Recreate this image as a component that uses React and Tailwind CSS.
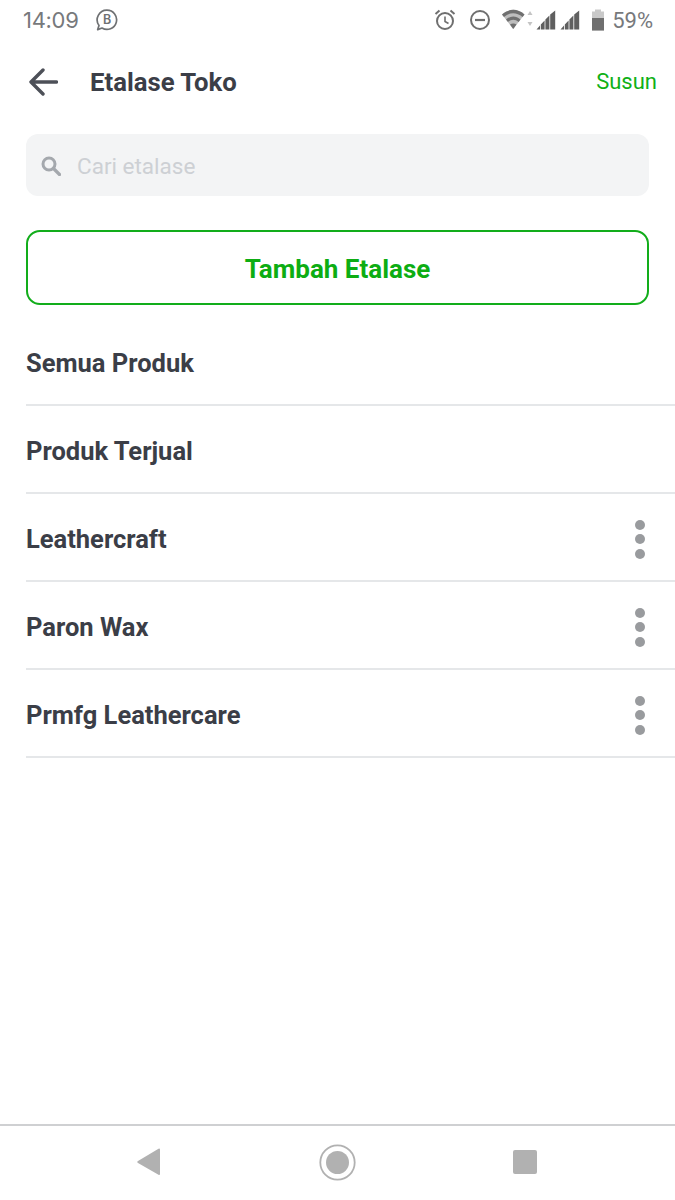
import React from "react";

function Dots() {
  return (
    <div className="flex flex-col gap-[4.5px] items-center pt-[4px]">
      <span className="w-[10px] h-[10px] rounded-full bg-[#999b9e]" />
      <span className="w-[10px] h-[10px] rounded-full bg-[#999b9e]" />
      <span className="w-[10px] h-[10px] rounded-full bg-[#999b9e]" />
    </div>
  );
}

function Row({ label, menu }) {
  return (
    <div className="h-[88px] ml-[26px] border-b-2 border-[#e5e7e9] flex items-center justify-between pr-[30px]">
      <span className="text-[25.5px] font-bold text-[#3b3e47] pt-[4px]">{label}</span>
      {menu && <Dots />}
    </div>
  );
}

function Signal() {
  return (
    <svg width="20" height="20" viewBox="0 0 20 20">
      <path d="M0.5 19.5 L4 15.5 V19.5Z M4.8 14.5 L8.6 10.5 V19.5 H4.8Z M9.4 9.6 L13.4 5.4 V19.5 H9.4Z M14.2 4.6 L19.2 0.6 V19.5 H14.2Z" fill="#5f5f5f" />
    </svg>
  );
}

export default function App() {
  return (
    <div className="w-[675px] h-[1200px] bg-white flex flex-col font-['Roboto',sans-serif] overflow-hidden">
      <div className="h-[40px] flex items-center justify-between pl-[23px] pr-[22px] text-[#77797c]">
        <div className="flex items-center gap-[16px]">
          <span className="text-[22px] font-['Inter',sans-serif] tracking-[-0.3px]">14:09</span>
          <svg width="24" height="24" viewBox="0 0 24 24" fill="none">
            <path d="M12 2.2a9.6 9.6 0 1 1-5 17.8l-4.3 1.6 1.3-4.2A9.6 9.6 0 0 1 12 2.2Z" stroke="#6f7173" strokeWidth="1.7" strokeLinejoin="round" />
            <text x="12" y="16.2" textAnchor="middle" fontSize="12.5" fontWeight="600" fill="#6f7173" fontFamily="Inter, sans-serif">B</text>
          </svg>
        </div>
        <div className="flex items-center">
          <svg width="22" height="24" viewBox="0 0 22 24" fill="none" className="mr-[13px]">
            <circle cx="11" cy="13" r="8" stroke="#6f6f6f" strokeWidth="2" />
            <path d="M11 8.5V13.5L14.5 15.5" stroke="#6f6f6f" strokeWidth="1.6" />
            <path d="M1.5 6L5.5 2.5M20.5 6L16.5 2.5" stroke="#6f6f6f" strokeWidth="2" />
          </svg>
          <svg width="22" height="22" viewBox="0 0 22 22" fill="none" className="mr-[10px]">
            <circle cx="11" cy="11" r="9" stroke="#6f6f6f" strokeWidth="2" />
            <path d="M6 11H16" stroke="#6f6f6f" strokeWidth="2.2" />
          </svg>
          <svg width="34" height="22" viewBox="0 0 34 22" fill="none" className="mr-[1px]">
            <path d="M1 5.5C8 -0.5 16 -1 23.5 5.5L12.2 20Z" fill="#bdbdbd" />
            <path d="M1 5.5C8 -0.5 16 -1 23.5 5.5L21.6 8C15.5 3 8.5 3 3 8Z" fill="#6f6f6f" />
            <path d="M5 10.5C9.5 6.5 15 6.5 19.5 10.5L17.6 13C14 10 10.5 10 7 13Z" fill="#6f6f6f" />
            <path d="M9 15.5C11 14 13.5 14 15.5 15.5L12.2 20Z" fill="#6f6f6f" />
            <path d="M29 2L31.5 6H26.5ZM29 17L31.5 13H26.5Z" fill="#c4c4c4" />
          </svg>
          <Signal />
          <span className="w-[4px]" />
          <Signal />
          <svg width="14" height="22" viewBox="0 0 14 22" className="ml-[11px] mr-[7px]">
            <path d="M4 0.5H10V2.5H13V21.5H1V2.5H4Z" fill="#c9c9c9" />
            <path d="M1 9H13V21.5H1Z" fill="#6f6f6f" />
          </svg>
          <span className="text-[22px]">59%</span>
        </div>
      </div>

      <div className="h-[84px] flex items-center justify-between pl-[29px] pr-[18px]">
        <div className="flex items-center gap-[32px]">
          <svg width="29" height="28" viewBox="0 0 29 28" fill="none">
            <path d="M27.5 14H3M14 2L2 14L14 26" stroke="#4d5058" strokeWidth="3.4" strokeLinecap="round" strokeLinejoin="round" />
          </svg>
          <span className="text-[25.7px] font-bold text-[#3b3e47]">Etalase Toko</span>
        </div>
        <span className="text-[22px] text-[#0fb016] pb-[2px]">Susun</span>
      </div>

      <div className="mt-[10px] mx-[26px] h-[62px] rounded-[12px] bg-[#f3f4f5] flex items-center pl-[15px] gap-[16px]">
        <svg width="20" height="20" viewBox="0 0 20 20" fill="none" className="mt-[2px]">
          <circle cx="8" cy="8" r="6" stroke="#a4a8ad" strokeWidth="3" />
          <path d="M12.5 12.5L18.5 18.5" stroke="#a4a8ad" strokeWidth="3.2" strokeLinecap="round" />
        </svg>
        <span className="text-[22.5px] text-[#cdd0d4] pt-[4px]">Cari etalase</span>
      </div>

      <div className="mt-[34px] mx-[26px] h-[75px] rounded-[14px] border-2 border-[#12ad1b] flex items-center justify-center">
        <span className="text-[26px] font-bold text-[#0dad13] pt-[4px]">Tambah Etalase</span>
      </div>

      <div className="mt-[13px]">
        <Row label="Semua Produk" />
        <Row label="Produk Terjual" />
        <Row label="Leathercraft" menu />
        <Row label="Paron Wax" menu />
        <Row label="Prmfg Leathercare" menu />
      </div>

      <div className="mt-auto h-[76px] border-t-2 border-[#cfd0d2] flex items-center relative pb-[2px]">
        <div className="w-full flex items-center pl-[136px] pr-[138px] justify-between">
          <svg width="26" height="28" viewBox="0 0 26 28">
            <path d="M24 1.5V26a1 1 0 0 1-1.5.8L2 15a1.2 1.2 0 0 1 0-2L22.5 0.7A1 1 0 0 1 24 1.5Z" fill="#b1b1b1" />
          </svg>
          <svg width="37" height="37" viewBox="0 0 37 37" fill="none">
            <circle cx="18.5" cy="18.5" r="17.2" stroke="#b1b1b1" strokeWidth="1.8" />
            <circle cx="18.5" cy="18.5" r="11.5" fill="#b1b1b1" />
          </svg>
          <span className="w-[24px] h-[24px] rounded-[2px] bg-[#b1b1b1]" />
        </div>
      </div>
    </div>
  );
}
